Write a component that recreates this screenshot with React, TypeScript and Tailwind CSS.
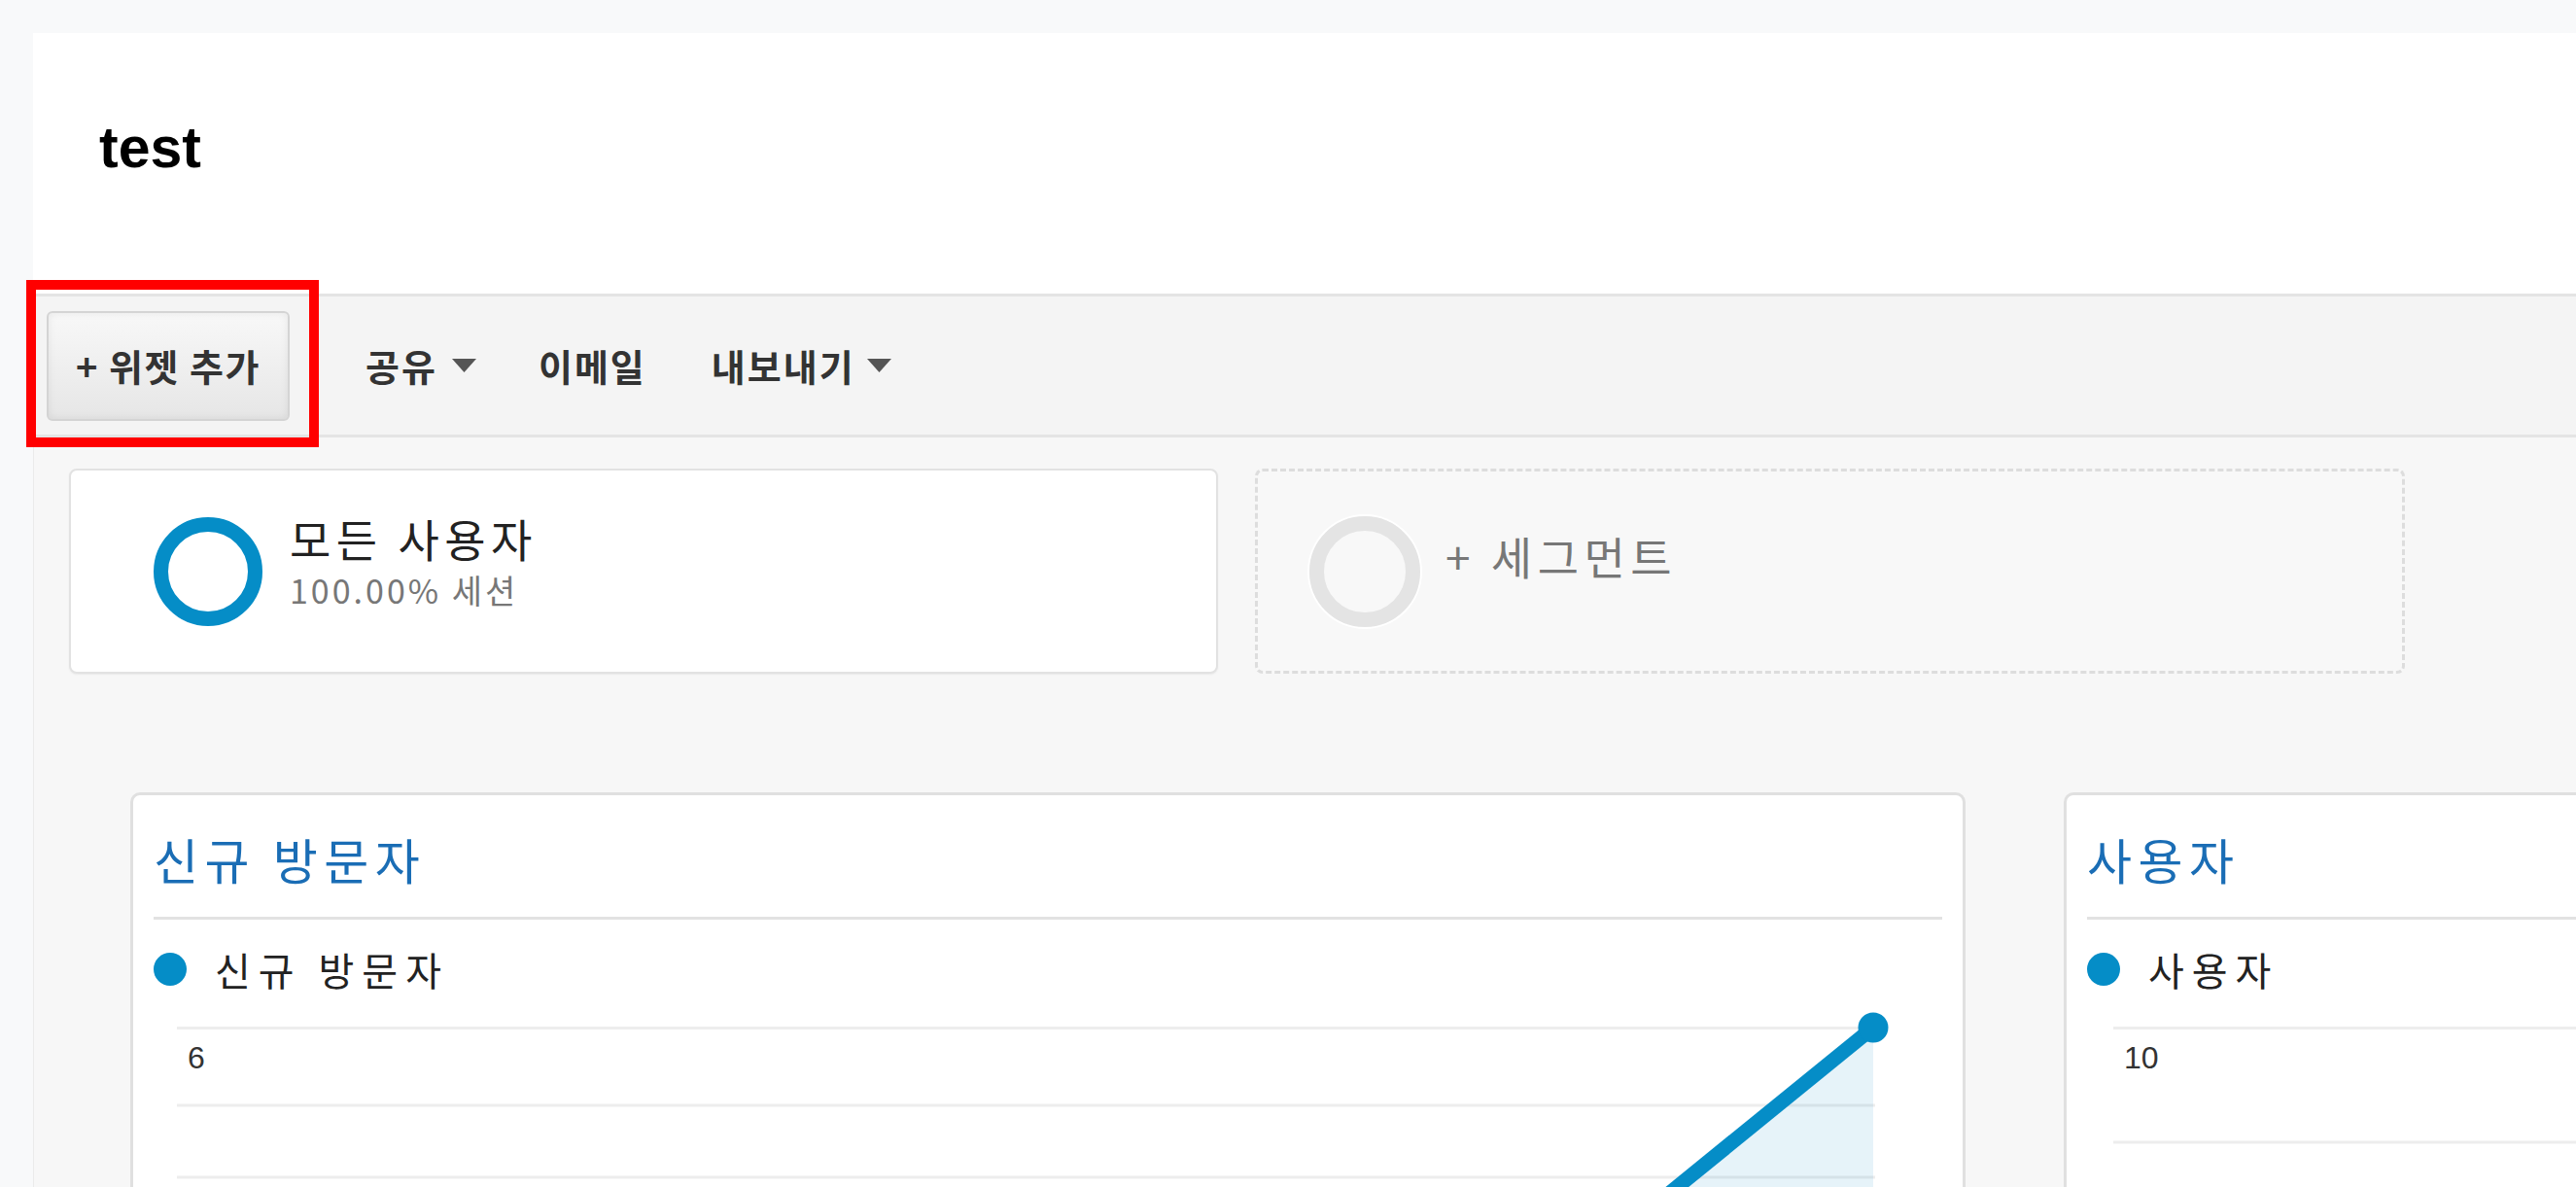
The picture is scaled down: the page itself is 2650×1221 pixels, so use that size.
// 대시보드 화면 (test) — 툴바, 세그먼트, 위젯 카드
const KR = "font-['Noto_Sans_CJK_KR',sans-serif]";

function Caret() {
  return (
    <svg width="25" height="14" viewBox="0 0 25 14" className="shrink-0">
      <polygon points="0,0 25,0 12.5,14" fill="#555" />
    </svg>
  );
}

function Toolbar() {
  return (
    <div className="relative flex h-[148px] shrink-0 items-center border-y-[3px] border-[#e4e4e4] bg-[#f4f4f4] pl-[14px]">
      <button
        className={`${KR} flex h-[113px] w-[250px] items-center justify-center rounded-[6px] border-2 border-[#d4d4d4] bg-gradient-to-b from-[#f8f8f8] to-[#e6e6e6] text-[38px] font-bold leading-none tracking-[1.5px] text-[#333] shadow-[inset_0_0_8px_rgba(0,0,0,0.07)]`}
      >
        + 위젯 추가
      </button>
      <div className={`${KR} ml-[78px] flex items-center text-[38px] font-bold leading-none tracking-[2px] text-[#333]`}>
        <span>공유</span>
        <span className="ml-[15px]"><Caret /></span>
        <span className="ml-[64px]">이메일</span>
        <span className="ml-[67px]">내보내기</span>
        <span className="ml-[12px]"><Caret /></span>
      </div>
      {/* 강조 표시 */}
      <div className="pointer-events-none absolute left-[-7px] top-[-17px] h-[172px] w-[301px] border-[10px] border-[#ff0000]" />
    </div>
  );
}

function Segments() {
  return (
    <div className="flex gap-[38px] pl-[36px] pt-[32px]">
      <div className="flex h-[211px] w-[1182px] shrink-0 items-center rounded-[8px] border-2 border-[#e2e2e2] bg-white pl-[85px] shadow-[0_1px_2px_rgba(0,0,0,0.06)]">
        <div className="h-[112px] w-[112px] shrink-0 rounded-full border-[15px] border-[#058dc7]" />
        <div className={`${KR} mb-[21px] ml-[28px] flex flex-col`}>
          <span className="text-[46px] leading-none tracking-[5.5px] text-[#222]">모든 사용자</span>
          <span className="mt-[14px] text-[34px] leading-none tracking-[3px] text-[#777]">100.00% 세션</span>
        </div>
      </div>
      <div className="flex h-[211px] w-[1183px] shrink-0 items-center rounded-[8px] border-[3px] border-dashed border-[#dddddd] bg-[#f8f8f8] pl-[53px]">
        <div className="h-[114px] w-[114px] shrink-0 rounded-full border-[15px] border-[#e4e4e4] shadow-[0_0_0_2px_#ffffff]" />
        <span className={`${KR} mb-[34px] ml-[26px] text-[46px] leading-none tracking-[5.5px] text-[#777]`}>+ 세그먼트</span>
      </div>
    </div>
  );
}

type ChartProps = {
  label: string;
  grid: number[];
  width: number;
  line?: boolean;
  ml: string;
};

function Chart({ label, grid, width, line, ml }: ChartProps) {
  const endX = width - 2;
  const startX = endX - 380;
  return (
    <div className={`relative h-[400px] ${ml}`} style={{ width }}>
      <svg className="absolute inset-0 overflow-visible" width={width} height={400}>
        {grid.map((y) => (
          <line key={y} x1={0} x2={width} y1={y} y2={y} stroke="#ededed" strokeWidth={3} />
        ))}
        {line && (
          <>
            <polygon points={`${startX},310 ${endX},1 ${endX},400 ${startX},400`} fill="#058dc7" fillOpacity={0.1} />
            <line x1={startX} y1={310} x2={endX} y2={1} stroke="#058dc7" strokeWidth={15} />
            <circle cx={endX} cy={1} r={15.5} fill="#058dc7" />
          </>
        )}
      </svg>
      <div className="relative pl-[11px] pt-[16px] font-['Liberation_Sans',sans-serif] text-[32px] leading-none text-[#333]">
        {label}
      </div>
    </div>
  );
}

function WidgetCard({ title, w, children }: { title: string; w: string; children: React.ReactNode }) {
  return (
    <div className={`${w} h-[600px] shrink-0 rounded-t-[10px] border-[3px] border-[#e0e0e0] bg-white px-[21px] pt-[40px]`}>
      <h2 className={`${KR} text-[50px] leading-none tracking-[6.5px] text-[#1a6db5]`}>{title}</h2>
      <div className="mt-[35px] h-[3px] bg-[#e2e2e2]" />
      <div className="mt-[31px] flex items-center">
        <span className="h-[34px] w-[34px] shrink-0 rounded-full bg-[#058dc7]" />
        <span className={`${KR} ml-[29px] text-[40px] leading-none tracking-[8px] text-[#222]`}>{title}</span>
      </div>
      <div className="mt-[39px]">{children}</div>
    </div>
  );
}

export default function App() {
  return (
    <div className="h-[1221px] overflow-hidden bg-[#f8f9fa] pl-[34px] pt-[34px]">
      <div className="flex h-full flex-col bg-[#f7f7f7]">
        <header className="h-[268px] shrink-0 bg-white pl-[68px] pt-[89px]">
          <h1 className="font-['Liberation_Sans',sans-serif] text-[59px] font-bold leading-none text-black">test</h1>
        </header>
        <Toolbar />
        <div className="flex-1 border-l border-[#ebebeb]">
          <Segments />
          <div className="mt-[122px] flex items-start gap-[101px] pl-[99px]">
            <WidgetCard title="신규 방문자" w="w-[1888px]">
              <Chart label="6" grid={[1.5, 81, 155]} width={1747} line ml="ml-[24px]" />
            </WidgetCard>
            <WidgetCard title="사용자" w="w-[1000px]">
              <Chart label="10" grid={[1.5, 119]} width={900} ml="ml-[27px]" />
            </WidgetCard>
          </div>
        </div>
      </div>
    </div>
  );
}
